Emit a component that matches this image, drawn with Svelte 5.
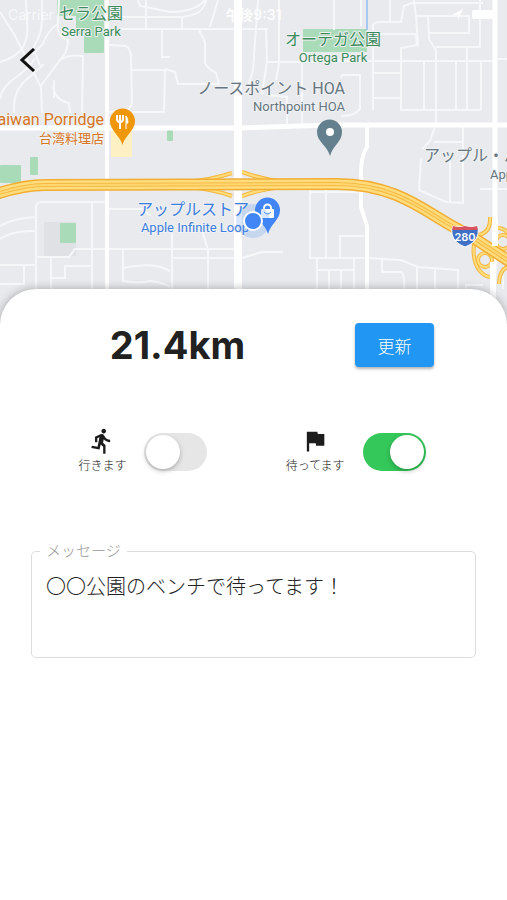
<script>
	let going = $state(false);
	let waiting = $state(true);
	let message = $state('〇〇公園のベンチで待ってます！');

	const distance = '21.4km';

	const streets = [
		// north west
		'M0 12 L14 34 L41 87 L42 113', 'M0 62 Q14 58 22 49 Q29 36 27 24 L26 0',
		'M42 0 L42 20 Q42 34 34 46 L33 55', 'M59 0 L58 24 Q47 31 43 44 L35 52 L40 66',
		'M58 24 Q56 36 68 40 Q68 52 60 60 L40 87', 'M0 99 Q2 86 18 76 Q31 66 35 58',
		'M14 113 Q13 92 24 82 L44 64', 'M53 87 Q55 100 69 103 L70 113', 'M60 60 Q68 54 83 56 L82 113',
		'M54 80 L54 98',
		'M107 45 L126 46 Q131 49 131 58 L132 102 Q131 109 125 112 L109 112', 'M131 70 H170', 'M165 70 L164 112 H132',
		'M107 29 H268', 'M162 29 V57 H170', 'M138 0 L140 6 L170 12 Q195 12 205 0', 'M107 17 H180 Q204 16 206 0',
		'M182 17 V29', 'M218 0 L210 27', 'M146 29 V0',
		// north centre
		'M199 30 L205 42 V63 Q208 69 216 73 L219 84 H178 L175 72 L165 69',
		'M258 0 L253 70 L246 94', 'M266 29 L267 62 L262 94', 'M279 0 V64 L276 80', 'M267 62 H300 L320 62', 'M302 62 V90',
		'M267 95 L287 97 V124', 'M302 92 V124', 'M334 0 V30',
		// north east
		'M361 0 V26', 'M373 110 V25 Q374 22 379 22 H401 L404 6 L412 3 H483', 'M390 0 V22',
		'M373 34 H416 L417 46', 'M414 0 L416 16 L418 45 L401 48 V110 H481', 'M416 16 H469 V33 H429',
		'M428 16 L429 39 L436 50 V124 L430 141 L422 149', 'M436 47 H480 V0', 'M467 47 V110', 'M337 61 H494', 'M494 59 H507',
		'M373 73 H401', 'M373 98 H401', 'M424 61 V110', 'M456 61 V110', 'M481 61 V110',
		'M341 78 L342 75 H360 V109 Q353 117 341 116', 'M434 142 H462', 'M463 127 V150',
		'M421 158 L419 190 L446 202 L463 203 V155', 'M450 158 V202', 'M480 189 H507',
		// south west
		'M36 289 V207 Q36 202 42 202 H107', 'M92 202 V289', 'M36 257 H69 L75 249 H237', 'M51 257 V289',
		'M51 278 H65 V266 H92', 'M0 226 Q13 218 36 217', 'M0 239 Q13 230 36 231', 'M0 265 H36', 'M24 265 V284 H0',
		'M107 209 H142 L151 216', 'M123 250 V281 Q140 284 150 281 Q162 282 170 287', 'M123 268 Q148 263 161 267 L170 271',
		'M172 225 V289', 'M202 230 L208 250 V289', 'M172 258 H237',
		// south east
		'M242 258 L252 255 L262 252 H283', 'M310 190 V258 H372', 'M326 190 V258', 'M317 258 V289', 'M317 270 H352', 'M329 270 V289',
		'M367 236 H340 V258', 'M310 192 H360', 'M337 270 H354 V258', 'M341 270 V289', 'M354 270 V289',
		'M367 258 L401 260 L418 267 L458 270 V289', 'M382 258 V272 H401 Q405 274 404 289', 'M417 267 V289', 'M435 268 V289',
		'M466 289 V285 H483', 'M503 289 V276'
	];

	const parks = [
		{ x: 57, y: 0, w: 20, h: 16 },
		{ x: 76, y: 0, w: 28, h: 34 },
		{ x: 84, y: 30, w: 20, h: 23 },
		{ x: 303, y: 29, w: 64, h: 23 },
		{ x: 0, y: 165, w: 21, h: 18 },
		{ x: 30, y: 157, w: 8, h: 18 },
		{ x: 60, y: 223, w: 16, h: 20 },
		{ x: 167, y: 130, w: 6, h: 11 }
	];

	const freeway = 'M-4 194 Q24 185 45 185 L337 184 C404 184 432 219 466 233 L512 263';
	const ramps = [
		'M188 182 Q210 180 232 173', 'M188 187 Q212 189 232 196',
		'M242 172 Q264 180 286 182', 'M242 196 Q264 188 286 187',
		'M490 217 Q491 233 478 235', 'M474 244 Q472 262 480 271 Q485 277 491 277',
		'M497 228 Q508 228 511 240', 'M499 284 Q499 268 512 265'
	];
	const loops = [
		{ x: 485, y: 260, r: 7 },
		{ x: 503, y: 242, r: 7 }
	];

	const labels = [
		{ x: 91, y: 19, text: 'セラ公園', kind: 'park', anchor: 'middle', large: true },
		{ x: 91, y: 36, text: 'Serra Park', kind: 'park', anchor: 'middle' },
		{ x: 333, y: 45, text: 'オーテガ公園', kind: 'park', anchor: 'middle', large: true },
		{ x: 333, y: 62, text: 'Ortega Park', kind: 'park', anchor: 'middle' },
		{ x: 345, y: 94, text: 'ノースポイント HOA', kind: 'place', anchor: 'end', large: true },
		{ x: 345, y: 111, text: 'Northpoint HOA', kind: 'place', anchor: 'end' },
		{ x: 104, y: 125, text: 'Taiwan Porridge', kind: 'food', anchor: 'end', large: true },
		{ x: 104, y: 143, text: '台湾料理店', kind: 'food', anchor: 'end' },
		{ x: 424, y: 161, text: 'アップル・パーク', kind: 'place', anchor: 'start', large: true },
		{ x: 490, y: 179, text: 'Apple Park', kind: 'place', anchor: 'start' },
		{ x: 249, y: 215, text: 'アップルストア', kind: 'shop', anchor: 'end', large: true },
		{ x: 249, y: 232, text: 'Apple Infinite Loop', kind: 'shop', anchor: 'end' }
	];
</script>

<main class="screen">
	<header class="map-area">
		<svg class="map" viewBox="0 0 507 324" preserveAspectRatio="xMidYMin slice" role="img" aria-label="地図">
			<rect width="507" height="324" fill="#e8eaed" />
			<rect x="44" y="222" width="32" height="34" fill="#e0e1e5" />
			<rect x="111" y="128" width="21" height="29" fill="#fdf0c4" />
			{#each parks as p}
				<rect x={p.x} y={p.y} width={p.w} height={p.h} rx="1" fill="#aadbb8" />
			{/each}
			<path d="M367 0V30" stroke="#a6c8f2" stroke-width="2" />

			<g class="streets">
				{#each streets as d}<path {d} />{/each}
			</g>
			<g fill="none" stroke="#fff">
				<path d="M107 0V324" stroke-width="4" />
				<path d="M0 128H237L330 125H507" stroke-width="5" />
				<path d="M367 125V147Q361 156 361 172V207L367 226V324" stroke-width="4" />
				<path d="M495 0V240L492 324" stroke-width="5" />
			</g>

			<g fill="none">
				{#each ramps as d}
					<path {d} stroke="#f4b63e" stroke-width="4" />
					<path {d} stroke="#ffdc7c" stroke-width="2" />
				{/each}
				{#each loops as l}
					<circle cx={l.x} cy={l.y} r={l.r} stroke="#f4b63e" stroke-width="4" />
					<circle cx={l.x} cy={l.y} r={l.r} stroke="#ffdc7c" stroke-width="2" />
				{/each}
				<path d={freeway} stroke="#f2ae33" stroke-width="12" />
				<path d={freeway} stroke="#ffdd7e" stroke-width="9" />
				<path d={freeway} stroke="#f5b942" stroke-width="4" />
				<path d={freeway} stroke="#ffd772" stroke-width="2" />
			</g>
			<path d="M238 0V178M238 191V324" stroke="#fff" stroke-width="8" />
			<path d="M495 220V246M493 262V324" stroke="#fff" stroke-width="6" />

			<!-- interstate shield -->
			<path d="M453 226q6 2 12 0 6 2 12 0 2 4 1 8-2 9-13 13-11-4-13-13-1-4 1-8z" fill="#3f70c6" stroke="#fff" />
			<path d="M453 226q6 2 12 0 6 2 12 0l1 4H452z" fill="#d65360" />
			<text class="route" x="465" y="241">280</text>

			<!-- restaurant -->
			<path d="M122.5 145C120 135 110 131 110 121a12.5 12.5 0 0 1 25 0c0 10-10 14-12.5 24z" fill="#f09609" />
			<path d="M117 115v4q0 3 3 3t3-3v-4M120 115v14" fill="none" stroke="#fff" stroke-width="2" />
			<path d="M126 129v-13q2 2 2 7h-2" fill="#fff" stroke="#fff" />

			<!-- residence -->
			<path d="M330 156C327 145 317 142 317 132a12.5 12.5 0 0 1 25 0c0 10-9 13-12 24z" fill="#64808e" />
			<circle cx="330" cy="132" r="4" fill="#fff" />

			<!-- shop -->
			<path d="M268 234C265 223 255 220 255 210a12.5 12.5 0 0 1 25 0c0 10-9 13-12 24z" fill="#4285f4" />
			<rect x="261" y="209" width="13" height="9" rx="1" fill="#fff" />
			<path d="M264 210v-2a3.5 3.5 0 0 1 7 0v2" fill="none" stroke="#fff" stroke-width="2" />
			<path d="M264 212q3.5 4 7 0" fill="none" stroke="#4285f4" />

			{#each labels as l}
				<text class="label {l.kind}" class:large={l.large} x={l.x} y={l.y} text-anchor={l.anchor}>{l.text}</text>
			{/each}

			<!-- current position -->
			<circle cx="253" cy="221" r="17" fill="#4285f4" opacity=".2" />
			<circle cx="253" cy="221" r="9" fill="#4285f4" stroke="#fff" stroke-width="2" />
		</svg>

		<div class="status-bar">
			<span class="carrier">Carrier</span>
			<span class="clock">午後9:31</span>
			<svg class="status-icons" width="48" height="14" viewBox="0 0 48 14" aria-hidden="true">
				<path d="M1 8 12 2 7 13V8z" fill="#fff" />
				<rect x="21" y="3" width="22" height="9" rx="2" fill="#fff" />
			</svg>
		</div>
		<button class="back" aria-label="戻る">
			<svg width="16" height="24" viewBox="0 0 16 24" aria-hidden="true">
				<path d="M14 1 2 12l12 11" fill="none" stroke="#111" stroke-width="3" />
			</svg>
		</button>
	</header>

	<section class="sheet">
		<div class="summary">
			<h1>{distance}</h1>
			<button class="update">更新</button>
		</div>

		<div class="toggles">
			<label class="toggle">
				<span class="caption">
					<svg width="28" height="28" viewBox="0 0 24 24" aria-hidden="true">
						<path d="M13.49 5.48c1.1 0 2-.9 2-2s-.9-2-2-2-2 .9-2 2 .9 2 2 2zm-3.6 13.9l1-4.4 2.1 2v6h2v-7.5l-2.1-2 .6-3c1.3 1.5 3.3 2.5 5.5 2.5v-2c-1.9 0-3.5-1-4.3-2.4l-1-1.6c-.4-.6-1-1-1.7-1-.3 0-.5.1-.8.1l-5.2 2.2v4.7h2v-3.4l1.8-.7-1.6 8.1-4.9-1-.4 2 7 1.4z" />
					</svg>
					行きます
				</span>
				<input type="checkbox" role="switch" bind:checked={going} />
			</label>
			<label class="toggle">
				<span class="caption">
					<svg width="28" height="28" viewBox="0 0 24 24" aria-hidden="true">
						<path d="M14.4 6L14 4H5v17h2v-7h5.6l.4 2h7V6z" />
					</svg>
					待ってます
				</span>
				<input type="checkbox" role="switch" bind:checked={waiting} />
			</label>
		</div>

		<fieldset class="message">
			<legend><label for="message">メッセージ</label></legend>
			<textarea id="message" rows="3" bind:value={message}></textarea>
		</fieldset>
	</section>
</main>

<style>
	:global(body) { background: #fff; }
	.screen {
		font-family: Inter, "Noto Sans CJK JP", sans-serif;
		color: #212121;
	}

	.map-area { position: relative; }
	.map { display: block; width: 100%; height: 324px; }
	.streets path { fill: none; stroke: #f6f7f9; stroke-width: 2; }
	.label {
		font-family: Roboto, "Noto Sans CJK JP", sans-serif; font-size: 13px;
		paint-order: stroke; stroke: #f0f2f4; stroke-width: 2px; stroke-linejoin: round;
	}
	.large { font-size: 16px; }
	.park { fill: #3b8b5b; }
	.place { fill: #66757f; }
	.food { fill: #d6751d; }
	.shop { fill: #3d7de0; }
	.route { font-size: 11px; font-weight: 600; fill: #fff; text-anchor: middle; }

	.status-bar {
		position: absolute; top: 0; left: 0; right: 0;
		display: grid; grid-template-columns: 1fr auto 1fr; align-items: center;
		height: 28px; padding: 0 8px; color: #fff; font-size: 14px;
	}
	.carrier { opacity: 0.7; }
	.clock { font-weight: 600; opacity: 0.9; }
	.status-icons { justify-self: end; }
	.back {
		position: absolute; top: 40px; left: 8px; width: 40px; height: 40px;
		display: grid; place-items: center; padding: 0;
		background: none; border: none; cursor: pointer;
	}

	.sheet {
		position: relative; margin-top: -35px; padding-bottom: 32px;
		background: #fff; border-radius: 36px 36px 0 0;
		box-shadow: 0 0 10px rgba(0, 0, 0, 0.3);
	}
	.summary { display: flex; align-items: center; padding: 34px 73px 0 0; }
	h1 { flex: 1; margin: 0; text-align: center; font-size: 38px; line-height: 44px; font-weight: 700; }
	.update {
		width: 79px; height: 44px; padding: 0;
		background: #2196f3; color: #fff; border: none; border-radius: 4px;
		box-shadow: 0 2px 3px rgba(0, 0, 0, 0.3);
		font-family: inherit; font-size: 17px; font-weight: 300; cursor: pointer;
	}

	.toggles { display: flex; justify-content: space-evenly; margin-top: 60px; padding-right: 3px; }
	.toggle { display: flex; align-items: center; gap: 18px; cursor: pointer; }
	.caption {
		display: flex; flex-direction: column; align-items: center;
		font-size: 12px; line-height: 22px; font-weight: 300; color: #222;
	}
	.caption svg { fill: #1c1c1c; }
	.toggle input {
		appearance: none; width: 63px; height: 38px; margin: 0; padding: 2px;
		display: flex; background: #e6e6e6; border-radius: 19px; cursor: pointer;
	}
	.toggle input::before {
		content: ''; width: 34px; height: 34px; border-radius: 50%;
		background: #fff; box-shadow: 0 2px 5px rgba(0, 0, 0, 0.25);
	}
	.toggle input:checked { justify-content: flex-end; background: #34c759; }

	.message {
		margin: 64px 31px 0; padding: 0 14px 8px;
		border: 1px solid #dcdcdc; border-radius: 5px; min-width: 0;
	}
	legend { margin-left: -6px; padding: 0 6px; font-size: 15px; line-height: 20px; font-weight: 300; color: #999; }
	textarea {
		display: block; box-sizing: border-box; width: 100%; height: 88px; margin: 0; padding: 12px 0 0;
		border: none; outline: none; resize: none; background: none;
		font-family: inherit; font-size: 20px; line-height: 28px; font-weight: 300; color: #222;
	}
</style>
